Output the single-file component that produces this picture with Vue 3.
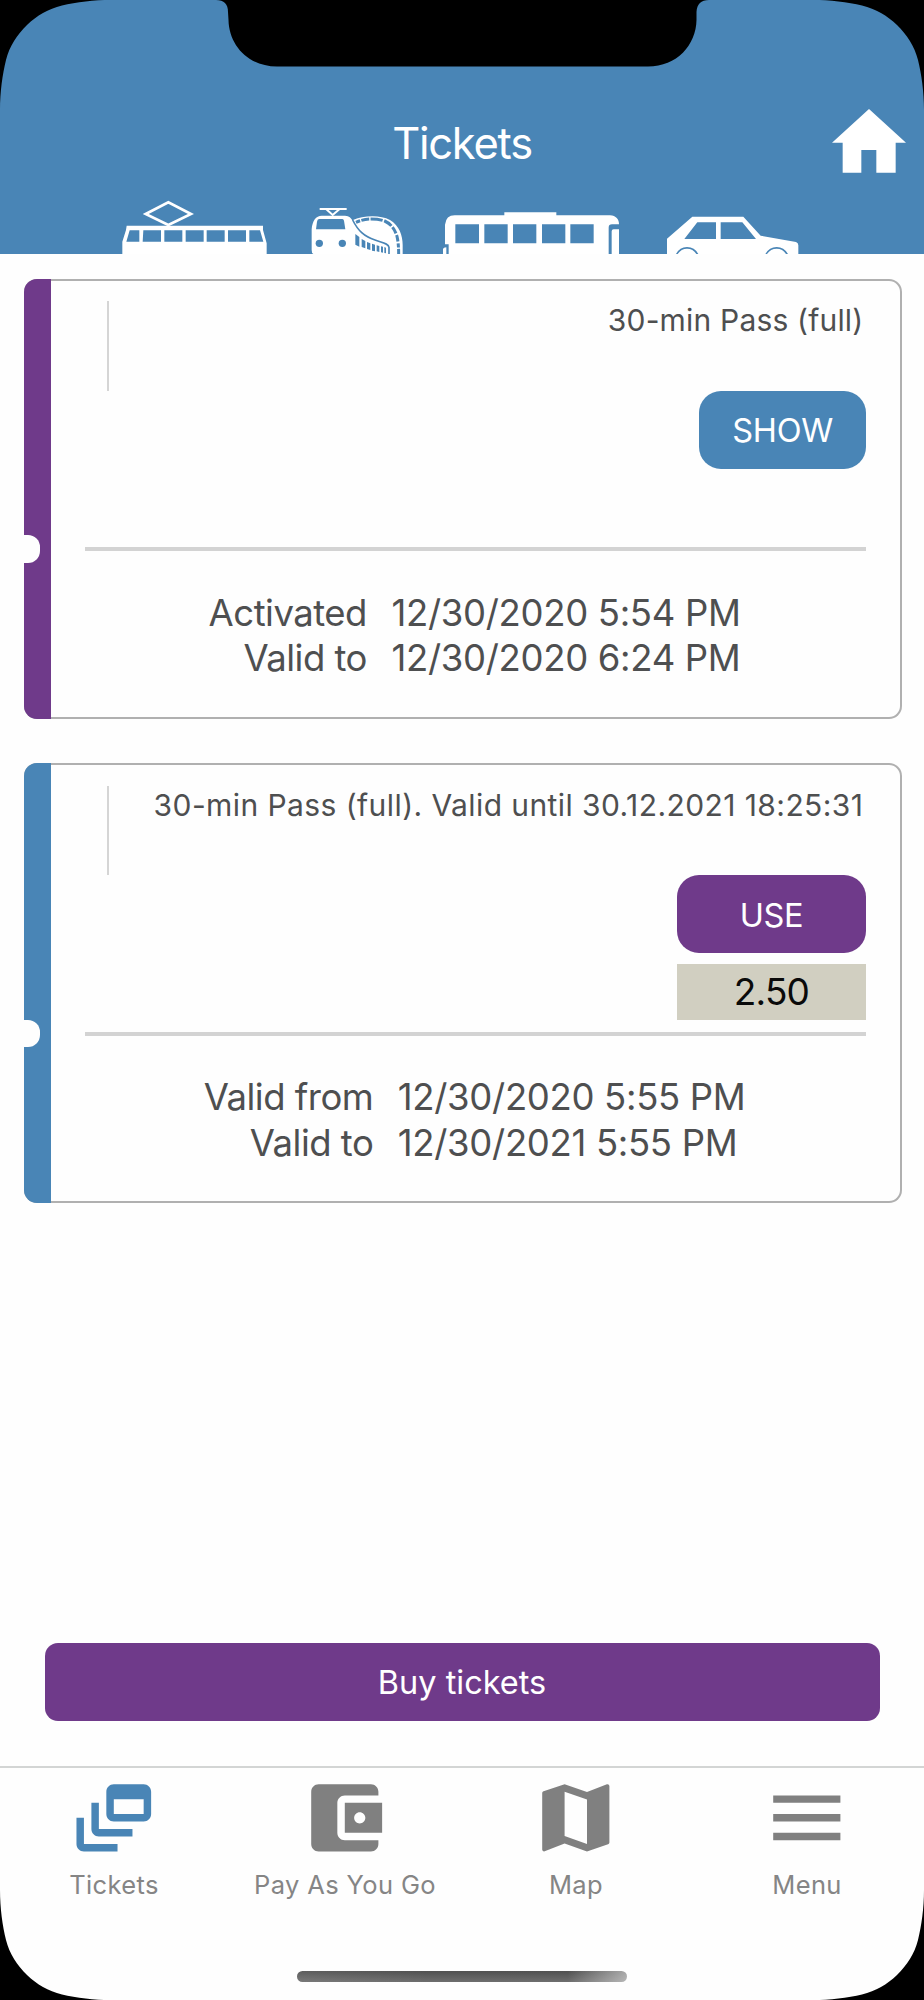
<script setup>
const tickets = [
  {
    tone: 'purple',
    title: '30-min Pass (full)',
    action: 'SHOW',
    actionTone: 'blue',
    price: null,
    rows: [
      ['Activated', '12/30/2020 5:54 PM'],
      ['Valid to', '12/30/2020 6:24 PM'],
    ],
  },
  {
    tone: 'blue',
    title: '30-min Pass (full). Valid until 30.12.2021 18:25:31',
    action: 'USE',
    actionTone: 'purple',
    price: '2.50',
    rows: [
      ['Valid from', '12/30/2020 5:55 PM'],
      ['Valid to', '12/30/2021 5:55 PM'],
    ],
  },
]

const tabs = [
  {
    label: 'Tickets',
    active: true,
    icon: 'M8 8H6v7c0 1.1.9 2 2 2h9v-2H8V8zM20 3h-8c-1.1 0-2 .9-2 2v6c0 1.1.9 2 2 2h8c1.1 0 2-.9 2-2V5c0-1.1-.9-2-2-2zm0 8h-8V7h8v4zM4 12H2v7c0 1.1.9 2 2 2h9v-2H4v-7z',
  },
  {
    label: 'Pay As You Go',
    icon: 'M21 18v1c0 1.1-.9 2-2 2H5c-1.11 0-2-.9-2-2V5c0-1.1.89-2 2-2h14c1.1 0 2 .9 2 2v1h-9c-1.11 0-2 .9-2 2v8c0 1.1.89 2 2 2h9zm-9-2h10V8H12v8zm4-2.5c-.83 0-1.5-.67-1.5-1.5s.67-1.5 1.5-1.5 1.5.67 1.5 1.5-.67 1.5-1.5 1.5z',
  },
  {
    label: 'Map',
    icon: 'M20.5 3l-.16.03L15 5.1 9 3 3.36 4.9c-.21.07-.36.25-.36.48V20.5c0 .28.22.5.5.5l.16-.03L9 18.9l6 2.1 5.64-1.9c.21-.07.36-.25.36-.48V3.5c0-.28-.22-.5-.5-.5zM15 19l-6-2.11V5l6 2.11V19z',
  },
  { label: 'Menu', icon: 'M3 18h18v-2H3v2zm0-5h18v-2H3v2zm0-7v2h18V6H3z' },
]
</script>

<template>
  <div class="phone">
    <header class="header">
      <div class="bar">
        <span></span>
        <h1 class="heading">Tickets</h1>
        <svg class="home" viewBox="0 0 222 191">
          <path d="M0 101L111 0L222 101H191V191H133V123H88V191H32V101Z" fill="#fff" />
        </svg>
      </div>
      <svg class="fleet" viewBox="0 0 2772 192">
        <!-- tram -->
        <g transform="translate(300 0)">
          <path d="M137 72L205 37L273 72L205 105Z" fill="none" stroke="#fff" stroke-width="8" />
          <path d="M80 107H489V120L500 160V192H67V155L78 120Z" fill="#fff" />
          <path class="cut" d="M89 121H118V155H79ZM130 121H183V155H128ZM193 121H247V155H193ZM257 121H311V155H257ZM320 121H374V155H320ZM384 121H438V155H384ZM448 121H480L490 155H448Z" />
        </g>
        <!-- train with trailing carriages -->
        <g transform="translate(300 0)">
          <path d="M659 57H740M679 58L698 75L718 58" fill="none" stroke="#fff" stroke-width="6" />
          <path d="M640 192Q635 190 635 180V118C637 92 648 77 665 77H735C748 78 753 84 757 91C790 76 840 74 870 90C898 106 908 138 908 165V192Z" fill="#fff" />
          <path class="cut" d="M657 87H727Q731 87 732 92L736 118H648L651 95Q652 87 657 87Z" />
          <circle class="cut" cx="658" cy="160" r="11" />
          <circle class="cut" cx="727" cy="160" r="11" />
          <path class="line" d="M758 90C774 122 792 139 825 150C846 158 866 161 867 172V192" stroke-width="5" />
          <path class="line" d="M768 97Q790 87 812 87Q838 87 854 93Q880 104 891 139Q896 160 896 192" stroke-width="9" stroke-dasharray="13 4 24 4 36 5 27 5 22 5 20 5" />
          <path class="cut" d="M766 132L778 141V170L766 164ZM785 147L796 153V175L785 171ZM801 156L811 160V180L801 177ZM816 161L825 164V184L816 182ZM830 166L838 168V186L830 184ZM843 169L849 170V188L843 187ZM853 171L858 173V190L853 189Z" />
        </g>
        <!-- bus -->
        <g transform="translate(1260 0)">
          <path d="M75 163V104Q78 76 104 76H253V67H409V76H570C588 77 597 88 597 103H576Q566 103 566 113V192H86V163Z" fill="#fff" />
          <path d="M575 192V124Q575 118 581 118H597V192ZM69 192V177Q70 172 79 172V192Z" fill="#fff" />
          <path class="cut" d="M106 103H177V160H106ZM193 103H263V160H193ZM279 103H349V160H279ZM366 103H436V160H366ZM451 103H521V160H451Z" />
        </g>
        <!-- car -->
        <g transform="translate(1260 0)">
          <path d="M741 192V146L817 80H970L1022 137L1128 156Q1135 158 1135 166V192Z" fill="#fff" />
          <path class="cut" d="M832 97H888V147H793ZM902 97H967L1008 147H902Z" />
          <path class="cut" d="M768 192Q779 171 801 171Q824 171 835 192H829Q819 176 801 176Q784 176 773 192ZM1036 192Q1048 171 1070 171Q1092 171 1104 192H1098Q1088 176 1070 176Q1052 176 1041 192Z" />
        </g>
      </svg>
    </header>

    <main class="content">
      <section v-for="t in tickets" :key="t.title" class="ticket">
        <div class="stripe" :class="t.tone"><i class="punch"></i></div>
        <div class="body">
          <div class="top">
            <div class="tick"></div>
            <div class="info">
              <div class="title" :class="{ long: t.title.length > 30 }">{{ t.title }}</div>
              <div class="actions">
                <button class="action" :class="[t.actionTone, { wide: t.price }]">{{ t.action }}</button>
                <div v-if="t.price" class="price">{{ t.price }}</div>
              </div>
            </div>
          </div>
          <div class="dates">
            <div class="col right">
              <span v-for="r in t.rows" :key="r[0]">{{ r[0] }}</span>
            </div>
            <div class="col">
              <span v-for="r in t.rows" :key="r[0]">{{ r[1] }}</span>
            </div>
          </div>
        </div>
      </section>
    </main>

    <button class="buy purple">Buy tickets</button>

    <footer class="footer">
      <nav class="tabs">
        <a v-for="tab in tabs" :key="tab.label" class="tab" :class="{ active: tab.active }">
          <svg class="icon" viewBox="0 0 24 24"><path :d="tab.icon" fill="currentColor" /></svg>
          <span class="label">{{ tab.label }}</span>
        </a>
      </nav>
      <div class="indicator"></div>
    </footer>

    <!-- rounded display corners and sensor notch -->
    <svg class="bezel" viewBox="0 0 924 2000">
      <defs>
        <path id="corner" d="M0 0H110C95 0 76 2 62 5.5C48 9 37 15.5 27 25C17 35 9.5 46 6 60C2.5 74 0 92 0 110Z" />
      </defs>
      <use href="#corner" />
      <use href="#corner" transform="translate(924 0) scale(-1 1)" />
      <use href="#corner" transform="translate(0 2000) scale(1 -1)" />
      <use href="#corner" transform="translate(924 2000) scale(-1 -1)" />
      <path d="M216 0C224 0 228 4 228 12L228.5 20C229 45 248 66.5 277 66.5H648C677 66.5 696 45 696.5 20V12C697 4 701 0 709 0Z" />
    </svg>
  </div>
</template>

<style>
body {
  margin: 0;
  background: #fff;
}
</style>

<style scoped>
.phone {
  position: relative;
  box-sizing: border-box;
  width: 924px;
  height: 2000px;
  display: flex;
  flex-direction: column;
  overflow: hidden;
  background: #fefefe;
  color: #4e4f50;
  font-family: Inter, "Liberation Sans", sans-serif;
}
button {
  border: 0;
  padding: 0;
  font-family: inherit;
  color: #fff;
}
.blue { background: #4985b6; }
.purple { background: #6f3a8a; }
.header {
  height: 254px;
  background: #4985b6;
  display: flex;
  flex-direction: column;
  justify-content: space-between;
}
.bar {
  box-sizing: border-box;
  display: grid;
  grid-template-columns: 1fr auto 1fr;
  padding: 109px 18.2px 0 18.2px;
}
.heading {
  margin: 7px 0 0;
  color: #fff;
  font-size: 43.5px;
  line-height: 54px;
  font-weight: 400;
  letter-spacing: -1.25px;
}
.home {
  width: 74px;
  height: 63.7px;
  justify-self: end;
}
.fleet {
  width: 924px;
  height: 64px;
  display: block;
}
.cut { fill: #4985b6; }
.line { fill: none; stroke: #4985b6; }
.content {
  flex: 1;
  display: flex;
  flex-direction: column;
  gap: 44.7px;
  padding: 24.5px 22px 0 24.3px;
}
.ticket {
  box-sizing: border-box;
  height: 440px;
  display: flex;
  border-radius: 13px;
  box-shadow: inset 0 0 0 2px #b0b0b0;
}
.stripe {
  width: 27px;
  border-radius: 13px 0 0 13px;
  padding-top: 256.8px;
  box-sizing: border-box;
}
.punch {
  display: block;
  width: 16px;
  height: 27.3px;
  background: #fefefe;
  border-radius: 0 12px 12px 0;
}
.body {
  flex: 1;
  padding: 0 35.6px 0 33.5px;
}
.top {
  box-sizing: border-box;
  height: 272.8px;
  display: flex;
  border-bottom: 4.8px solid #d3d3d3;
  padding: 22.5px 0 0 22px;
}
.tick {
  width: 2px;
  height: 89.5px;
  background: #d5d5d5;
}
.info {
  flex: 1;
  display: flex;
  flex-direction: column;
  align-items: flex-end;
}
.title {
  height: 89.5px;
  padding-right: 3px;
  font-size: 30px;
  line-height: 38px;
  letter-spacing: 0.18px;
  white-space: nowrap;
}
.title.long { letter-spacing: 0.42px; }
.actions {
  display: flex;
  flex-direction: column;
  gap: 11px;
}
.action {
  width: 167.6px;
  height: 78.2px;
  padding-top: 1.5px;
  border-radius: 22px;
  font-size: 32.5px;
  letter-spacing: -0.3px;
}
.action.wide { width: 189.8px; }
.price {
  height: 55.4px;
  background: #d1cfc1;
  color: #0a0a0a;
  font-size: 37px;
  line-height: 56px;
  letter-spacing: -0.8px;
  text-align: center;
}
.dates {
  display: flex;
  justify-content: center;
  gap: 24.5px;
  padding: 39.5px 2px 0 0;
  font-size: 36.5px;
  line-height: 45.3px;
  letter-spacing: -0.32px;
}
.col {
  display: flex;
  flex-direction: column;
  white-space: nowrap;
}
.right {
  align-items: flex-end;
  letter-spacing: -0.5px;
}
.buy {
  margin: 0 44.5px 44.5px;
  height: 78px;
  padding-top: 1px;
  border-radius: 13px;
  font-size: 32.5px;
}
.footer {
  height: 234.3px;
  box-sizing: border-box;
  border-top: 2px solid #d3d5d4;
  display: flex;
  flex-direction: column;
}
.tabs {
  display: grid;
  grid-template-columns: repeat(4, 231px);
  margin-left: -1.5px;
  height: 203px;
}
.tab {
  display: flex;
  flex-direction: column;
  align-items: center;
  padding-top: 5px;
  color: #808080;
}
.icon {
  width: 89.6px;
  height: 89.6px;
}
.active .icon { color: #4985b6; }
.label {
  margin-top: 6.7px;
  font-size: 25.5px;
  line-height: 32px;
  letter-spacing: 0.37px;
  color: #858585;
}
.indicator {
  width: 330px;
  height: 11px;
  margin-left: 297px;
  border-radius: 6px;
  background:
    linear-gradient(90deg, rgba(255,255,255,.08), rgba(255,255,255,0) 40%, rgba(255,255,255,0) 82%, rgba(255,255,255,.5)),
    linear-gradient(#505050, #6e6e6e);
}
.bezel {
  position: absolute;
  inset: 0;
  width: 924px;
  height: 2000px;
}
</style>
